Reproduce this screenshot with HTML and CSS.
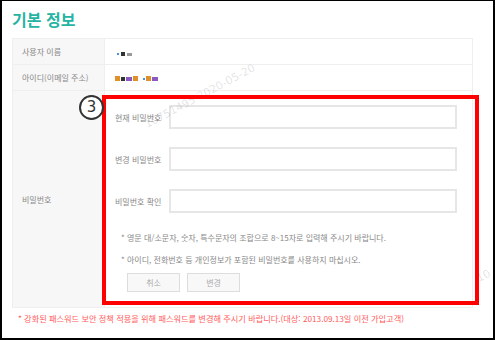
FILE: index.html
```html
<!DOCTYPE html>
<html lang="ko">
<head>
    <meta charset="UTF-8">
    <meta name="viewport" content="width=device-width, initial-scale=1.0">
    <title>기본 정보</title>
    <link rel="stylesheet" href="styles.css">
</head>
<body>
    <div class="frame">
        <h2 class="title">기본 정보</h2>
        <table class="info">
            <tr class="row-sm">
                <th>사용자 이름</th>
                <td><span class="masked m-name"><i class="b"></i><i class="d"></i><i class="g"></i></span></td>
            </tr>
            <tr class="row-sm">
                <th>아이디(이메일 주소)</th>
                <td><span class="masked m-id"><i class="o"></i><i class="d"></i><i class="p"></i><i class="o"></i><i class="s"></i><i class="b"></i><i class="o"></i><i class="p"></i></span></td>
            </tr>
            <tr>
                <th>비밀번호</th>
                <td class="pw-cell">
                    <div class="pw-row">
                        <label for="cur-pw">현재 비밀번호</label>
                        <input type="password" id="cur-pw">
                    </div>
                    <div class="pw-row">
                        <label for="new-pw">변경 비밀번호</label>
                        <input type="password" id="new-pw">
                    </div>
                    <div class="pw-row">
                        <label for="chk-pw">비밀번호 확인</label>
                        <input type="password" id="chk-pw">
                    </div>
                    <p class="note first">* 영문 대/소문자, 숫자, 특수문자의 조합으로 8~15자로 입력해 주시기 바랍니다.</p>
                    <p class="note">* 아이디, 전화번호 등 개인정보가 포함된 비밀번호를 사용하지 마십시오.</p>
                    <div class="btns">
                        <button type="button">취소</button>
                        <button type="button">변경</button>
                    </div>
                </td>
            </tr>
        </table>
        <p class="warn">* 강화된 패스워드 보안 정책 적용을 위해 패스워드를 변경해 주시기 바랍니다.(대상: 2013.09.13일 이전 가입고객)</p>

        <!-- 캡처 위에 덧그린 표시 -->
        <div class="watermark wm-main">10751495 2020-05-20</div>
        <div class="watermark wm-side">10</div>
        <div class="highlight"></div>
        <div class="badge">3</div>
    </div>
</body>
</html>
```

FILE: styles.css
```css
* {
    margin: 0;
    padding: 0;
    box-sizing: border-box;
}

body {
    font-family: 'Noto Sans CJK KR', 'Noto Sans', sans-serif;
    color: #333;
    background-color: #fff;
}

.frame {
    position: relative;
    width: 495px;
    height: 340px;
    border: 2px solid #000;
    border-top-width: 1px;
    padding: 8px 0 0 10px;
    overflow: hidden;
}

.title {
    font-size: 16px;
    line-height: 20px;
    font-weight: bold;
    color: #26b3a3;
    margin-bottom: 9px;
}

.info {
    width: 461px;
    border-collapse: collapse;
    border: 1px solid #efefef;
}

.info th,
.info td {
    border-bottom: 1px solid #efefef;
    font-size: 8px;
    font-weight: normal;
    text-align: left;
    vertical-align: middle;
}

.info th {
    width: 92px;
    padding-left: 9px;
    background-color: #f7f7f7;
    color: #888;
    border-right: 1px solid #efefef;
}

.row-sm th,
.row-sm td {
    height: 26px;
}

.info td {
    padding-left: 10px;
}

.masked {
    display: inline-flex;
    align-items: center;
    gap: 1px;
    filter: blur(0.6px);
}

.masked i {
    display: inline-block;
    width: 3px;
    height: 4px;
}

.m-name {
    margin-left: 2px;
    gap: 2px;
}

.masked .b { background: #4a8fe0; width: 2px; height: 2px; }
.masked .d { background: #333; width: 4px; }
.masked .g { background: #999; width: 5px; height: 3px; }
.masked .o { background: #e0902a; width: 5px; height: 5px; }
.masked .p { background: #8a5ac0; width: 6px; }
.masked .s { background: #fff; width: 3px; }

.pw-cell {
    padding: 14px 0 15px 8px;
}

.pw-row {
    display: flex;
    align-items: center;
    height: 24px;
    margin-bottom: 18px;
}

.pw-row label {
    width: 54px;
    font-size: 8px;
    color: #888;
    white-space: nowrap;
}

.pw-row input {
    width: 288px;
    height: 24px;
    border: 2px solid #e6e6e6;
    background: #fff;
}

.note {
    font-size: 8px;
    line-height: 14px;
    color: #888;
    padding-left: 6px;
    margin-bottom: 8px;
    white-space: nowrap;
}

.note.first {
    margin-top: 1px;
}

.btns {
    display: flex;
    gap: 7px;
    padding-left: 12px;
    margin-top: -2px;
}

.btns button {
    width: 53px;
    height: 19px;
    border: 1px solid #ddd;
    background-color: #f8f8f8;
    color: #aaa;
    font-family: inherit;
    font-size: 8px;
}

.warn {
    margin-top: 3px;
    padding-left: 6px;
    font-size: 8.2px;
    line-height: 14px;
    color: #ff5c5c;
    white-space: nowrap;
}

.watermark {
    position: absolute;
    font-family: 'DejaVu Sans', sans-serif;
    font-size: 11px;
    line-height: 11px;
    color: rgba(0, 0, 0, 0.12);
    white-space: nowrap;
    transform-origin: 0 100%;
    transform: rotate(-28deg);
}

.wm-main {
    left: 146px;
    top: 118px;
}

.wm-side {
    left: 478px;
    top: 272px;
}

.highlight {
    position: absolute;
    left: 100px;
    top: 94px;
    width: 377px;
    height: 210px;
    border: 4px solid #ff0000;
}

.badge {
    position: absolute;
    left: 77px;
    top: 94px;
    width: 25px;
    height: 25px;
    border: 2px solid #333;
    border-radius: 50%;
    background-color: #fff;
    font-family: 'DejaVu Sans', sans-serif;
    font-size: 15px;
    line-height: 21px;
    text-align: center;
    color: #333;
}
```
